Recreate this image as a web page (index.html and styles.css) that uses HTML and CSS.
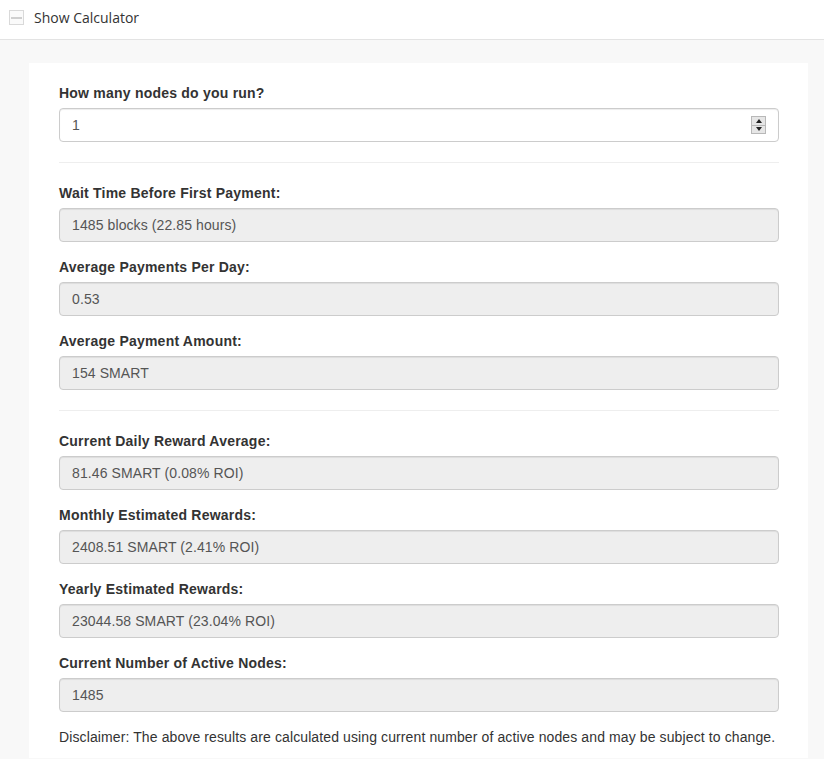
FILE: index.html
```html
<!DOCTYPE html>
<html>
<head>
<meta charset="utf-8">
<link rel="stylesheet" href="styles.css">
</head>
<body>
<div class="topbar">
  <span class="toggle"><span class="dash"></span></span>
  <span class="toggle-label">Show Calculator</span>
</div>
<div class="page">
  <div class="panel">
    <div class="group">
      <label>How many nodes do you run?</label>
      <div class="input-wrap">
        <div class="input editable">1</div>
        <div class="spinner">
          <div class="spin-btn"><span class="up"></span></div>
          <div class="spin-btn"><span class="down"></span></div>
        </div>
      </div>
    </div>
    <hr>
    <div class="group">
      <label>Wait Time Before First Payment:</label>
      <div class="input">1485 blocks (22.85 hours)</div>
    </div>
    <div class="group">
      <label>Average Payments Per Day:</label>
      <div class="input">0.53</div>
    </div>
    <div class="group">
      <label>Average Payment Amount:</label>
      <div class="input">154 SMART</div>
    </div>
    <hr>
    <div class="group">
      <label>Current Daily Reward Average:</label>
      <div class="input">81.46 SMART (0.08% ROI)</div>
    </div>
    <div class="group">
      <label>Monthly Estimated Rewards:</label>
      <div class="input">2408.51 SMART (2.41% ROI)</div>
    </div>
    <div class="group">
      <label>Yearly Estimated Rewards:</label>
      <div class="input">23044.58 SMART (23.04% ROI)</div>
    </div>
    <div class="group">
      <label>Current Number of Active Nodes:</label>
      <div class="input">1485</div>
    </div>
    <p class="disclaimer">Disclaimer: The above results are calculated using current number of active nodes and may be subject to change.</p>
  </div>
</div>
</body>
</html>
```
FILE: styles.css
```css
* { box-sizing: border-box; }
html, body { margin: 0; padding: 0; }
body {
  background: #f8f8f8;
  font-family: "Liberation Sans", Arial, sans-serif;
  font-size: 14px;
  line-height: 20px;
  color: #333;
}
.topbar {
  height: 40px;
  background: #fff;
  border-bottom: 1px solid #e3e3e3;
  display: flex;
  align-items: center;
  padding-left: 9px;
}
.toggle {
  width: 15px;
  height: 15px;
  border: 1px solid #d9d9d9;
  background: #fafafa;
  display: flex;
  align-items: center;
  justify-content: center;
  margin-top: -4px;
}
.dash {
  width: 11px;
  height: 2px;
  background: #cfcfcf;
}
.toggle-label {
  font-family: "Open Sans", sans-serif;
  font-size: 14px;
  color: #333;
  margin-left: 10px;
  margin-top: -3px;
}
.page {
  padding: 23px 16px 0 29px;
}
.panel {
  background: #fff;
  padding: 20px 29px 1px 30px;
}
.group { margin-bottom: 15px; }
label {
  display: block;
  font-weight: bold;
  margin-bottom: 5px;
  letter-spacing: 0.22px;
}
.input {
  height: 34px;
  padding: 6px 12px;
  border: 1px solid #ccc;
  border-radius: 4px;
  background: #eee;
  color: #555;
  font-size: 14px;
  line-height: 20px;
  letter-spacing: 0.1px;
  box-shadow: inset 0 1px 1px rgba(0,0,0,0.075);
}
.input.editable { background: #fff; }
.input-wrap { position: relative; }
.spinner {
  position: absolute;
  right: 13px;
  top: 8px;
  width: 15px;
  height: 18px;
  display: flex;
  flex-direction: column;
  border: 1px solid #b8b8b8;
  background: #e6e6e6;
}
.spin-btn {
  flex: 1;
  display: flex;
  align-items: center;
  justify-content: center;
}
.spin-btn + .spin-btn { border-top: 1px solid #b8b8b8; }
.up {
  width: 0; height: 0;
  border-left: 3px solid transparent;
  border-right: 3px solid transparent;
  border-bottom: 4px solid #222;
}
.down {
  width: 0; height: 0;
  border-left: 3px solid transparent;
  border-right: 3px solid transparent;
  border-top: 4px solid #222;
}
hr {
  margin: 20px 0;
  border: 0;
  border-top: 1px solid #eee;
  height: 0;
}
.disclaimer {
  margin: 0 0 10px;
  letter-spacing: 0.11px;
}
```
